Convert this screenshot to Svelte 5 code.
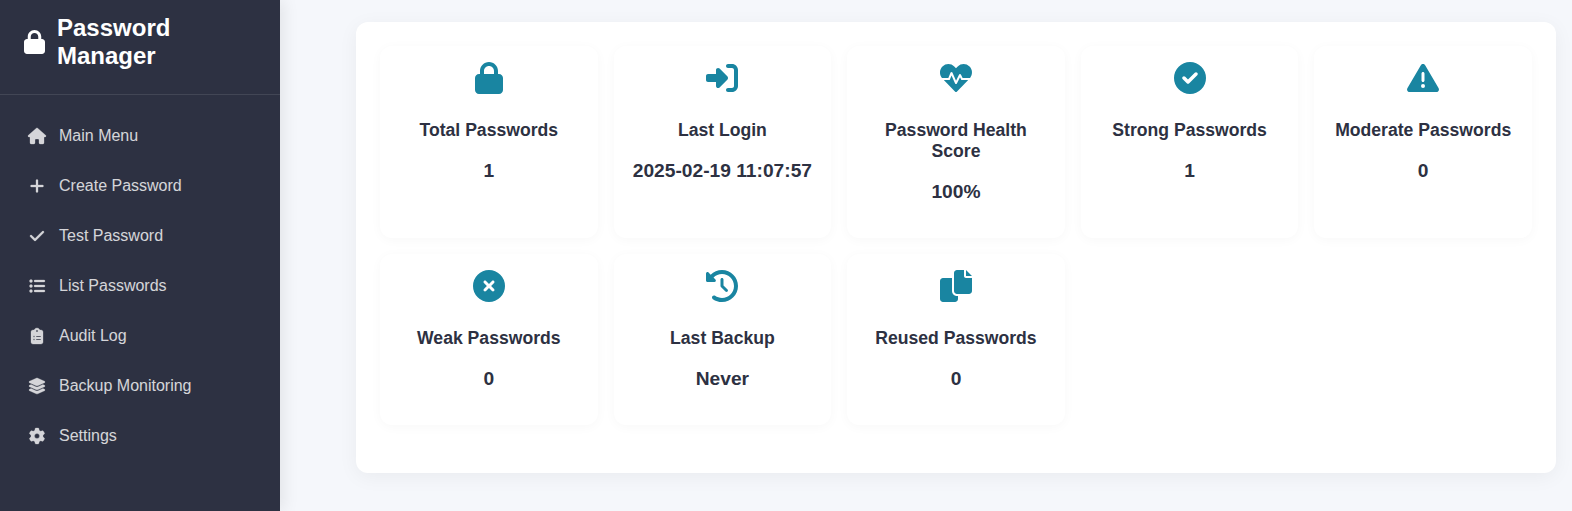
<script>
  const icons = {
    lock: [448, 'M144 144v48H304V144c0-44.2-35.8-80-80-80s-80 35.8-80 80zM80 192V144C80 64.5 144.5 0 224 0s144 64.5 144 144v48h16c35.3 0 64 28.7 64 64V448c0 35.3-28.7 64-64 64H64c-35.3 0-64-28.7-64-64V256c0-35.3 28.7-64 64-64H80z'],
    login: [512, 'M217.9 105.9L340.7 228.7c7.2 7.2 11.3 17.1 11.3 27.3s-4.1 20.1-11.3 27.3L217.9 406.1c-6.4 6.4-15 9.9-24 9.9c-18.7 0-33.9-15.2-33.9-33.9l0-62.1L32 320c-17.7 0-32-14.3-32-32l0-64c0-17.7 14.3-32 32-32l128 0 0-62.1c0-18.7 15.2-33.9 33.9-33.9c9 0 17.6 3.6 24 9.9zM352 416l64 0c17.7 0 32-14.3 32-32l0-256c0-17.7-14.3-32-32-32l-64 0c-17.7 0-32-14.3-32-32s14.3-32 32-32l64 0c53 0 96 43 96 96l0 256c0 53-43 96-96 96l-64 0c-17.7 0-32-14.3-32-32s14.3-32 32-32z'],
    heart: [512, 'M320.2 243.8l-49.7 99.4c-6 12.1-23.4 11.7-28.9-.6l-56.9-126.3-30 71.7H60.6l182.5 186.5c7.1 7.3 18.6 7.3 25.7 0L451.4 288H342.3l-22.1-44.2zM473.7 73.9l-2.4-2.5c-51.5-52.6-135.8-52.6-187.4 0L256 100l-27.9-28.5c-51.5-52.7-135.9-52.7-187.4 0l-2.4 2.4C-10.4 123.7-12.5 203 31 256h102.4l35.9-86.2c5.4-12.9 23.6-13.1 29.2-.4l58.2 129.3 49-97.9c5.9-11.8 22.7-11.8 28.6 0l27.6 55.2H481c43.5-53 41.4-132.3-7.3-182.1z'],
    circleCheck: [512, 'M256 512A256 256 0 1 0 256 0a256 256 0 1 0 0 512zM371.8 211.8l-128 128c-10.9 10.9-28.7 10.9-39.6 0l-64-64c-10.9-10.9-10.9-28.7 0-39.6s28.7-10.9 39.6 0L224 280.4l108.2-108.2c10.9-10.9 28.7-10.9 39.6 0s10.9 28.7 0 39.6z'],
    warning: [512, 'M256 32c14.2 0 27.3 7.5 34.5 19.8l216 368c7.3 12.4 7.3 27.7 .2 40.1S486.3 480 472 480H40c-14.3 0-27.6-7.7-34.7-20.1s-7-27.8 .2-40.1l216-368C228.7 39.5 241.8 32 256 32zm0 128c-13.3 0-24 10.7-24 24V296c0 13.3 10.7 24 24 24s24-10.7 24-24V184c0-13.3-10.7-24-24-24zm32 224a32 32 0 1 0 -64 0 32 32 0 1 0 64 0z'],
    circleX: [512, 'M256 512A256 256 0 1 0 256 0a256 256 0 1 0 0 512zM175 175c9.4-9.4 24.6-9.4 33.9 0l47 47 47-47c9.4-9.4 24.6-9.4 33.9 0s9.4 24.6 0 33.9l-47 47 47 47c9.4 9.4 9.4 24.6 0 33.9s-24.6 9.4-33.9 0l-47-47-47 47c-9.4 9.4-24.6 9.4-33.9 0s-9.4-24.6 0-33.9l47-47-47-47c-9.4-9.4-9.4-24.6 0-33.9z'],
    history: [512, 'M75 75L41 41C25.9 25.9 0 36.6 0 57.9V168c0 13.3 10.7 24 24 24H134.1c21.4 0 32.1-25.9 17-41l-30.8-30.8C155 85.5 203 64 256 64c106 0 192 86 192 192s-86 192-192 192c-40.8 0-78.6-12.7-109.7-34.4c-14.5-10.1-34.4-6.6-44.6 7.9s-6.6 34.4 7.9 44.6C151.2 495 201.7 512 256 512c141.4 0 256-114.6 256-256S397.4 0 256 0C185.3 0 121.3 28.7 75 75zm181 53c-13.3 0-24 10.7-24 24V256c0 6.4 2.5 12.5 7 17l72 72c9.4 9.4 24.6 9.4 33.9 0s9.4-24.6 0-33.9l-65-65V152c0-13.3-10.7-24-24-24z'],
    copy: [512, 'M272 0H384V96c0 17.7 14.3 32 32 32H512V336c0 26.5-21.5 48-48 48H272c-26.5 0-48-21.5-48-48V48c0-26.5 21.5-48 48-48zM416 0l96 96H416V0zM48 128H192V336c0 44.2 35.8 80 80 80h16v48c0 26.5-21.5 48-48 48H48c-26.5 0-48-21.5-48-48V176c0-26.5 21.5-48 48-48z'],
    house: [576, 'M575.8 255.5c0 18-15 32.1-32 32.1h-32l.7 160.2c0 2.7-.2 5.4-.5 8.1V472c0 22.1-17.9 40-40 40H456c-1.1 0-2.2 0-3.3-.1c-1.4 .1-2.8 .1-4.2 .1H416 392c-22.1 0-40-17.9-40-40V448 384c0-17.7-14.3-32-32-32H256c-17.7 0-32 14.3-32 32v64 24c0 22.1-17.9 40-40 40H160 128.1c-1.5 0-3-.1-4.5-.2c-1.2 .1-2.4 .2-3.6 .2H104c-22.1 0-40-17.9-40-40V360c0-.9 0-1.9 .1-2.8V287.6H32c-18 0-32-14-32-32.1c0-9 3-17 10-24L266.4 8c7-7 15-8 22-8s15 2 21 7L564.8 231.5c8 7 12 15 11 24z'],
    plus: [448, 'M256 80c0-17.7-14.3-32-32-32s-32 14.3-32 32V224H48c-17.7 0-32 14.3-32 32s14.3 32 32 32H192V432c0 17.7 14.3 32 32 32s32-14.3 32-32V288H400c17.7 0 32-14.3 32-32s-14.3-32-32-32H256V80z'],
    check: [448, 'M438.6 105.4c12.5 12.5 12.5 32.8 0 45.3l-256 256c-12.5 12.5-32.8 12.5-45.3 0l-128-128c-12.5-12.5-12.5-32.8 0-45.3s32.8-12.5 45.3 0L160 338.7 393.4 105.4c12.5-12.5 32.8-12.5 45.3 0z'],
    list: [512, 'M64 144a48 48 0 1 0 0-96 48 48 0 1 0 0 96zM192 64c-17.7 0-32 14.3-32 32s14.3 32 32 32H480c17.7 0 32-14.3 32-32s-14.3-32-32-32H192zm0 160c-17.7 0-32 14.3-32 32s14.3 32 32 32H480c17.7 0 32-14.3 32-32s-14.3-32-32-32H192zm0 160c-17.7 0-32 14.3-32 32s14.3 32 32 32H480c17.7 0 32-14.3 32-32s-14.3-32-32-32H192zM64 464a48 48 0 1 0 0-96 48 48 0 1 0 0 96zm48-208a48 48 0 1 0 -96 0 48 48 0 1 0 96 0z'],
    clipboard: [384, 'M192 0c-41.8 0-77.4 26.7-90.5 64H64C28.7 64 0 92.7 0 128V448c0 35.3 28.7 64 64 64H320c35.3 0 64-28.7 64-64V128c0-35.3-28.7-64-64-64H282.5C269.4 26.7 233.8 0 192 0zm0 64a32 32 0 1 1 0 64 32 32 0 1 1 0-64zM72 272a24 24 0 1 1 48 0 24 24 0 1 1 -48 0zm104-16H304c8.8 0 16 7.2 16 16s-7.2 16-16 16H176c-8.8 0-16-7.2-16-16s7.2-16 16-16zM72 368a24 24 0 1 1 48 0 24 24 0 1 1 -48 0zm88 0c0-8.8 7.2-16 16-16H304c8.8 0 16 7.2 16 16s-7.2 16-16 16H176c-8.8 0-16-7.2-16-16z'],
    layers: [576, 'M264.5 5.2c14.9-6.9 32.1-6.9 47 0l218.6 101c8.5 3.9 13.9 12.4 13.9 21.8s-5.4 17.9-13.9 21.8l-218.6 101c-14.9 6.9-32.1 6.9-47 0L45.9 149.8C37.4 145.8 32 137.3 32 128s5.4-17.9 13.9-21.8L264.5 5.2zM476.9 209.6l53.2 24.6c8.5 3.9 13.9 12.4 13.9 21.8s-5.4 17.9-13.9 21.8l-218.6 101c-14.9 6.9-32.1 6.9-47 0L45.9 277.8C37.4 273.8 32 265.3 32 256s5.4-17.9 13.9-21.8l53.2-24.6 152 70.2c23.4 10.8 50.4 10.8 73.8 0l152-70.2zm-152 198.2l152-70.2 53.2 24.6c8.5 3.9 13.9 12.4 13.9 21.8s-5.4 17.9-13.9 21.8l-218.6 101c-14.9 6.9-32.1 6.9-47 0L45.9 405.8C37.4 401.8 32 393.3 32 384s5.4-17.9 13.9-21.8l53.2-24.6 152 70.2c23.4 10.8 50.4 10.8 73.8 0z'],
    gear: [512, 'M495.9 166.6c3.2 8.7 .5 18.4-6.4 24.6l-43.3 39.4c1.1 8.3 1.7 16.8 1.7 25.4s-.6 17.1-1.7 25.4l43.3 39.4c6.9 6.2 9.6 15.9 6.4 24.6c-4.4 11.9-9.7 23.3-15.8 34.3l-4.7 8.1c-6.6 11-14 21.4-22.1 31.2c-5.9 7.2-15.7 9.6-24.5 6.8l-55.7-17.7c-13.4 10.3-28.2 18.9-44 25.4l-12.5 57.1c-2 9.1-9 16.3-18.2 17.8c-13.8 2.3-28 3.5-42.5 3.5s-28.7-1.2-42.5-3.5c-9.2-1.5-16.2-8.7-18.2-17.8l-12.5-57.1c-15.8-6.5-30.6-15.1-44-25.4L83.1 425.9c-8.8 2.8-18.6 .3-24.5-6.8c-8.1-9.8-15.5-20.2-22.1-31.2l-4.7-8.1c-6.1-11-11.4-22.4-15.8-34.3c-3.2-8.7-.5-18.4 6.4-24.6l43.3-39.4C64.6 273.1 64 264.6 64 256s.6-17.1 1.7-25.4L22.4 191.2c-6.9-6.2-9.6-15.9-6.4-24.6c4.4-11.9 9.7-23.3 15.8-34.3l4.7-8.1c6.6-11 14-21.4 22.1-31.2c5.9-7.2 15.7-9.6 24.5-6.8l55.7 17.7c13.4-10.3 28.2-18.9 44-25.4l12.5-57.1c2-9.1 9-16.3 18.2-17.8C227.3 1.2 241.5 0 256 0s28.7 1.2 42.5 3.5c9.2 1.5 16.2 8.7 18.2 17.8l12.5 57.1c15.8 6.5 30.6 15.1 44 25.4l55.7-17.7c8.8-2.8 18.6-.3 24.5 6.8c8.1 9.8 15.5 20.2 22.1 31.2l4.7 8.1c6.1 11 11.4 22.4 15.8 34.3zM256 336a80 80 0 1 0 0-160 80 80 0 1 0 0 160z']
  };

  const menu = [
    ['house', 'Main Menu'],
    ['plus', 'Create Password'],
    ['check', 'Test Password'],
    ['list', 'List Passwords'],
    ['clipboard', 'Audit Log'],
    ['layers', 'Backup Monitoring'],
    ['gear', 'Settings']
  ];

  const stats = [
    ['lock', 'Total Passwords', '1'],
    ['login', 'Last Login', '2025-02-19 11:07:57'],
    ['heart', 'Password Health Score', '100%'],
    ['circleCheck', 'Strong Passwords', '1'],
    ['warning', 'Moderate Passwords', '0'],
    ['circleX', 'Weak Passwords', '0'],
    ['history', 'Last Backup', 'Never'],
    ['copy', 'Reused Passwords', '0']
  ];
</script>

{#snippet icon(name)}
  <svg class="icon" viewBox="0 0 {icons[name][0]} 512" aria-hidden="true"><path d={icons[name][1]} /></svg>
{/snippet}

<div class="app">
  <aside class="sidebar">
    <div class="brand">
      {@render icon('lock')}
      <h2>Password Manager</h2>
    </div>
    <nav class="menu">
      {#each menu as [glyph, label]}
        <div class="item">
          <span class="glyph">{@render icon(glyph)}</span>
          <span>{label}</span>
        </div>
      {/each}
    </nav>
  </aside>
  <main class="content">
    <section class="panel">
      <div class="grid">
        {#each stats as [glyph, title, value]}
          <article class="card">
            <div class="card-icon">{@render icon(glyph)}</div>
            <h3>{title}</h3>
            <p>{value}</p>
          </article>
        {/each}
      </div>
    </section>
  </main>
</div>

<style>
  :global(body) {
    margin: 0;
    background: #f5f7fb;
    font-family: 'Liberation Sans', Arial, sans-serif;
    overflow: hidden;
  }
  .app {
    display: flex;
    height: 100vh;
    color: #2d3142;
  }
  .icon {
    display: block;
    height: 1em;
    fill: currentColor;
    flex: none;
    overflow: visible;
  }
  .sidebar {
    width: 280px;
    flex: none;
    background: #2d3142;
    color: #fff;
    box-shadow: 4px 0 15px rgba(0, 0, 0, 0.08);
  }
  .brand {
    display: flex;
    align-items: center;
    gap: 12px;
    box-sizing: border-box;
    height: 95px;
    padding: 14px 24px 25px;
    border-bottom: 1px solid rgba(255, 255, 255, 0.1);
    font-size: 24px;
  }
  h2 {
    margin: 0;
    font-size: 24px;
    font-weight: 700;
  }
  .menu {
    padding-top: 16px;
  }
  .item {
    display: flex;
    align-items: center;
    gap: 12px;
    height: 50px;
    padding-left: 27px;
    font-size: 16px;
    opacity: 0.8;
  }
  .glyph {
    display: flex;
    justify-content: center;
    width: 20px;
  }
  .glyph .icon,
  .glyph :global(.icon) {
    stroke: currentColor;
    stroke-width: 10;
  }
  .content {
    flex: 1;
    min-width: 0;
    padding: 22px 16px 0 76px;
  }
  .panel {
    padding: 24px 24px 48px;
    border-radius: 12px;
    background: #fff;
    box-shadow: 0 4px 20px rgba(0, 0, 0, 0.05);
  }
  .grid {
    display: grid;
    grid-template-columns: repeat(5, minmax(0, 1fr));
    gap: 16px;
  }
  .card {
    padding: 16px;
    border-radius: 12px;
    background: #fff;
    box-shadow: 0 2px 12px rgba(0, 0, 0, 0.03);
    text-align: center;
  }
  .card-icon {
    display: flex;
    justify-content: center;
    margin-bottom: 25.6px;
    font-size: 32px;
    color: #1985a1;
  }
  h3 {
    margin: 0;
    font-size: 17.6px;
    font-weight: 700;
  }
  p {
    margin: 19.2px 0;
    font-size: 19.2px;
    font-weight: 700;
    white-space: nowrap;
  }
</style>
